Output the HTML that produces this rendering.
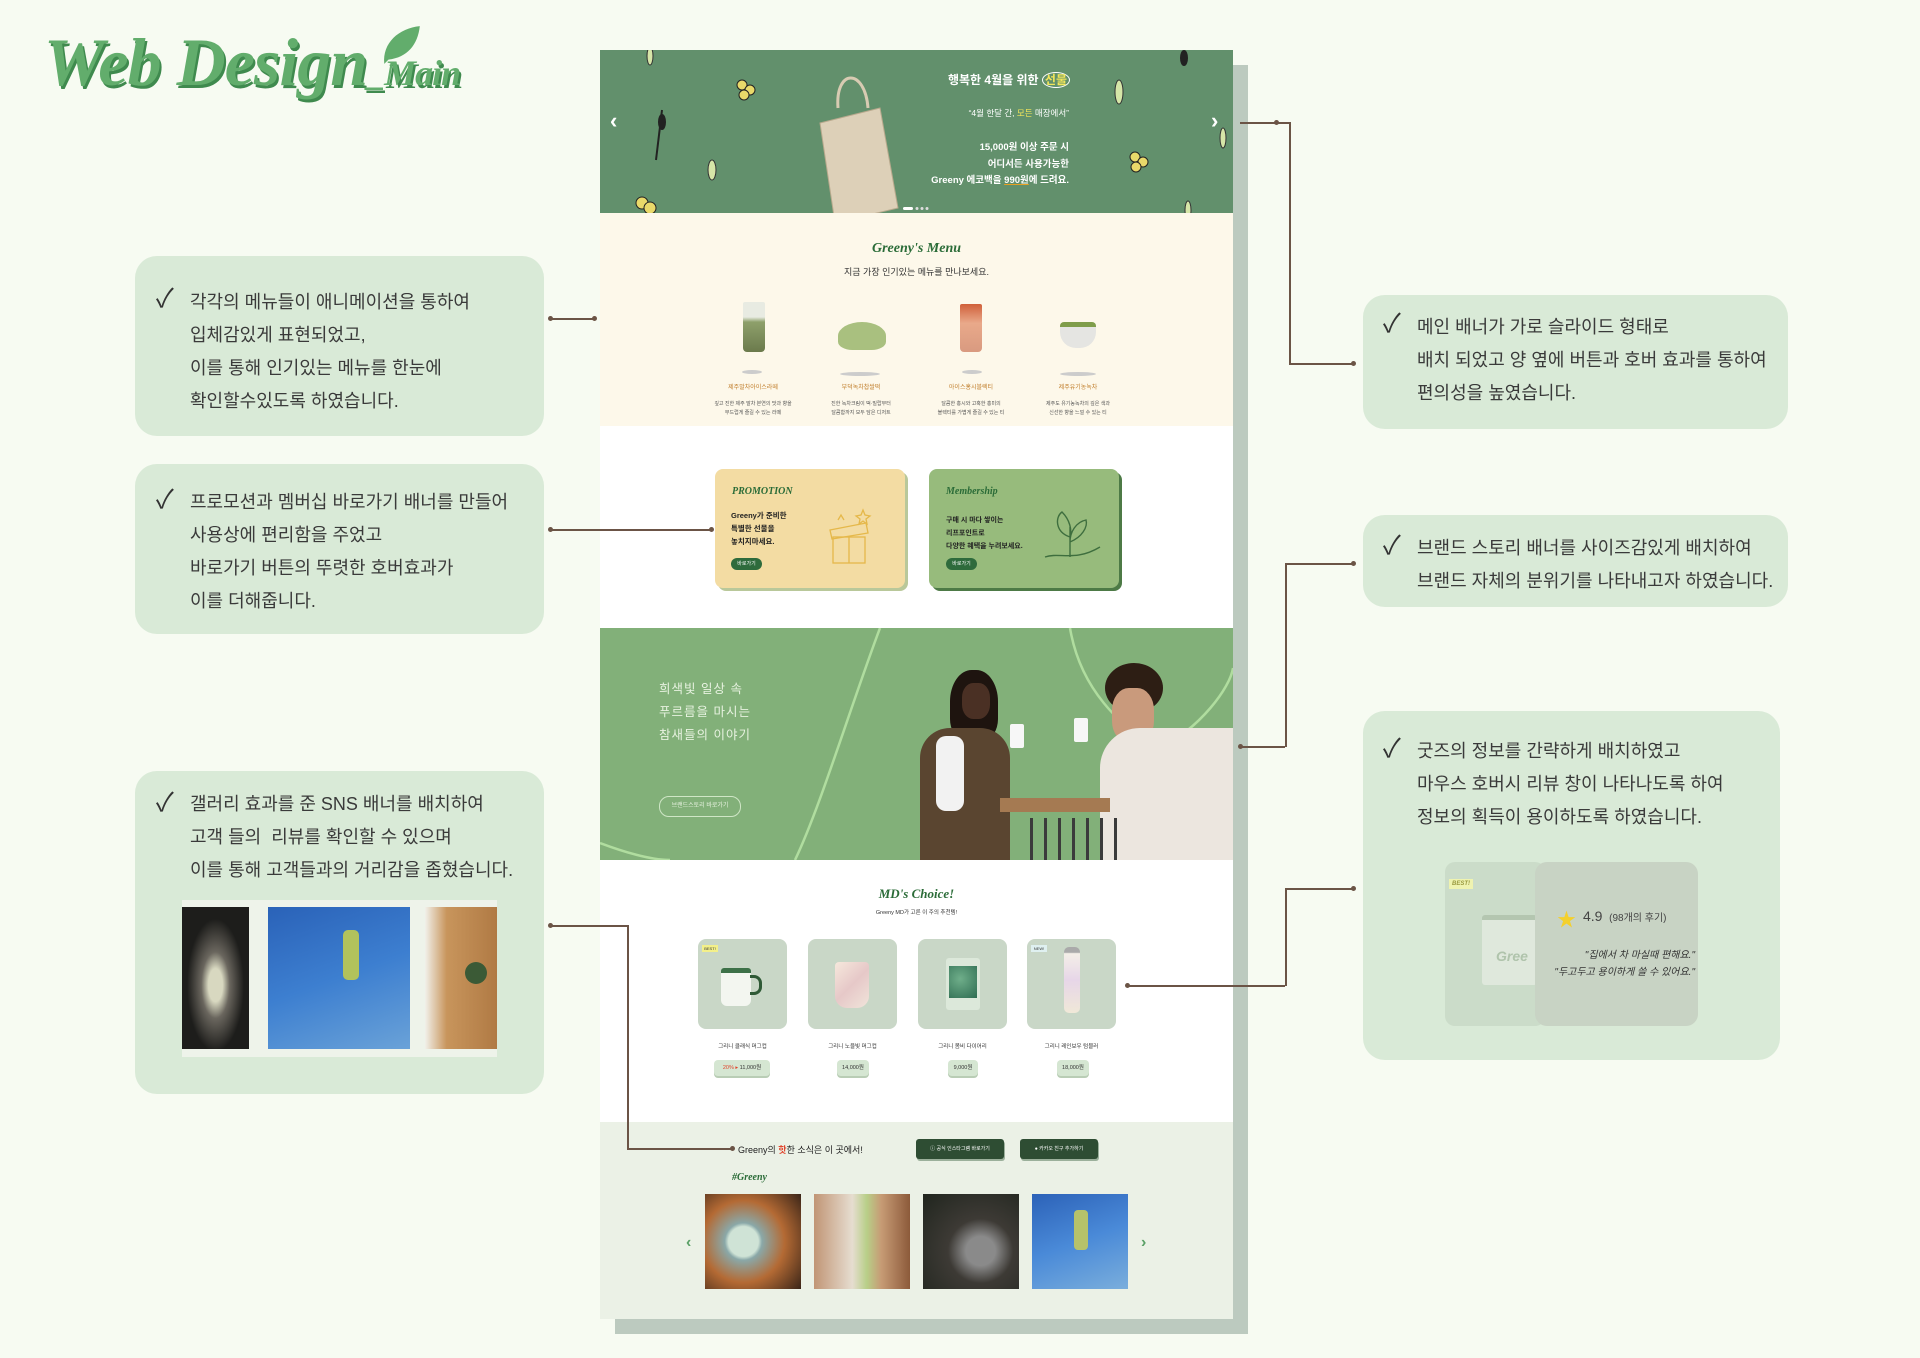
<!DOCTYPE html>
<html><head><meta charset="utf-8">
<style>
*{margin:0;padding:0;box-sizing:border-box}
body{width:1920px;height:1358px;background:#f7fbf2;position:relative;overflow:hidden;font-family:"Liberation Sans","Noto Sans CJK KR",sans-serif;color:#333}
.a{position:absolute}
.box{position:absolute;background:#d9ead7;border-radius:22px}
.tl{position:absolute;font-size:18px;line-height:24px;color:#3a3a3a;white-space:nowrap}
.ck{position:absolute;font-size:26px;line-height:24px;color:#333}
.ln{position:absolute;background:#6b5446}
.dot{position:absolute;width:5px;height:5px;border-radius:50%;background:#6b5446}
.c{text-align:center;white-space:nowrap}
.ser{font-family:"Liberation Serif","Noto Serif CJK SC",serif;font-style:italic;font-weight:bold}
</style></head><body>

<!-- title -->
<div class="a ser" style="left:44px;top:26px;font-size:68px;line-height:72px;color:#62ad6c;text-shadow:2px 3px 0 #3f8a4e;letter-spacing:-1px;font-weight:900">Web Design<span style="font-size:36px">_Main</span></div>
<svg class="a" style="left:378px;top:22px" width="46" height="46" viewBox="0 0 44 44"><path d="M6 40 C4 20 20 6 40 4 C38 22 28 34 10 36 Z" fill="#62ad6c"/></svg>

<!-- page shadow -->
<div class="a" style="left:615px;top:65px;width:633px;height:1269px;background:#bccabf"></div>
<!-- page -->
<div class="a" style="left:600px;top:50px;width:633px;height:1269px;background:#fff;overflow:hidden">
  <!-- banner -->
  <div class="a" style="left:0;top:0;width:633px;height:163px;background:#62906c"></div>
  <div class="a" style="left:10px;top:58px;color:#fff;font-size:22px;font-weight:bold">‹</div>
  <div class="a" style="left:611px;top:58px;color:#fff;font-size:22px;font-weight:bold">›</div>
  <svg class="a" style="left:0;top:0" width="633" height="163">
    <g fill="#e9d96a" stroke="#222" stroke-width="1"><circle cx="142" cy="35" r="5"/><circle cx="150" cy="40" r="5"/><circle cx="144" cy="45" r="5"/><circle cx="535" cy="107" r="5"/><circle cx="543" cy="112" r="5"/><circle cx="536" cy="117" r="5"/><circle cx="42" cy="153" r="6"/><circle cx="50" cy="158" r="6"/></g>
    <g stroke="#222" stroke-width="2" fill="#222"><path d="M56 110 L62 60"/><ellipse cx="62" cy="72" rx="3" ry="7"/><ellipse cx="584" cy="8" rx="3" ry="7"/></g>
    <g stroke="#333" fill="#d6e6a8"><ellipse cx="112" cy="120" rx="4" ry="10"/><ellipse cx="519" cy="42" rx="4" ry="12"/><ellipse cx="623" cy="88" rx="3" ry="10"/><ellipse cx="50" cy="6" rx="3" ry="9"/><ellipse cx="588" cy="160" rx="3" ry="9"/></g>
    <rect x="303" y="157" width="10" height="3" rx="1.5" fill="#fff"/><circle cx="317" cy="158.5" r="1.5" fill="#ddd"/><circle cx="322" cy="158.5" r="1.5" fill="#ddd"/><circle cx="327" cy="158.5" r="1.5" fill="#ddd"/>
  </svg>
  <svg class="a" style="left:210px;top:18px" width="100" height="160"><path d="M28 40 C25 0 55 0 58 40" stroke="#d8cbb2" stroke-width="3" fill="none"/><path d="M10 55 L70 40 L88 140 L25 155 Z" fill="#ddd0b8"/><path d="M10 55 L70 40 L88 140 L25 155 Z" fill="none" stroke="#b8a98d"/></svg>
  <div class="a c" style="right:163px;top:21px;font-size:12px;color:#fff;font-weight:bold;line-height:18px">행복한 4월을 위한 <span style="color:#f3e65a;border:1px solid #fff;border-radius:50%;padding:0 2px">선물</span></div>
  <div class="a c" style="right:164px;top:56px;font-size:8.5px;color:#fff;line-height:14px">“4월 한달 간, <span style="color:#f3e65a">모든</span> 매장에서”</div>
  <div class="a" style="right:164px;top:90px;font-size:9.5px;color:#fff;line-height:16.5px;text-align:right;font-weight:bold">15,000원 이상 주문 시<br>어디서든 사용가능한<br>Greeny 에코백을 <span style="text-decoration:underline;text-decoration-color:#e8a020">990원</span>에 드려요.</div>

  <!-- menu -->
  <div class="a" style="left:0;top:163px;width:633px;height:213px;background:#fdf8ea"></div>
  <div class="a c ser" style="left:0;width:633px;top:191px;font-size:14px;color:#2b6c38">Greeny's Menu</div>
  <div class="a c" style="left:0;width:633px;top:215px;font-size:9px;color:#333">지금 가장 인기있는 메뉴를 만나보세요.</div>
  <div class="a" style="left:143px;top:252px;width:22px;height:50px;background:linear-gradient(#e8ebe2 0 30%,#8ea06b 40%,#6b7a4c);border-radius:2px 2px 4px 4px"></div>
  <div class="a" style="left:238px;top:272px;width:48px;height:28px;background:#a9c07f;border-radius:50% 50% 30% 30%"></div>
  <div class="a" style="left:360px;top:254px;width:22px;height:48px;background:linear-gradient(#d0603a,#e9a98a 40%,#d99a80);border-radius:2px 2px 4px 4px"></div>
  <div class="a" style="left:460px;top:272px;width:36px;height:26px;background:#e5e5e2;border-radius:4px 4px 16px 16px;border-top:5px solid #7f9d4a"></div>
  <div class="a" style="left:142px;top:320px;width:20px;height:4px;background:#ccc;border-radius:50%"></div>
  <div class="a" style="left:240px;top:322px;width:40px;height:4px;background:#ccc;border-radius:50%"></div>
  <div class="a" style="left:362px;top:320px;width:20px;height:4px;background:#ccc;border-radius:50%"></div>
  <div class="a" style="left:460px;top:322px;width:36px;height:4px;background:#ccc;border-radius:50%"></div>
  <div class="a c" style="left:103px;width:100px;top:332px;font-size:6px;color:#c07d2a">제주말차아이스라떼</div>
  <div class="a c" style="left:211px;width:100px;top:332px;font-size:6px;color:#c07d2a">부덕녹차찹쌀떡</div>
  <div class="a c" style="left:321px;width:100px;top:332px;font-size:6px;color:#c07d2a">아이스홍시블렉티</div>
  <div class="a c" style="left:428px;width:100px;top:332px;font-size:6px;color:#c07d2a">제주유기농녹차</div>
  <div class="a c" style="left:103px;width:100px;top:350px;font-size:5px;line-height:9px;color:#555">깊고 진한 제주 말차 본연의 맛과 향을<br>부드럽게 즐길 수 있는 라떼</div>
  <div class="a c" style="left:211px;width:100px;top:350px;font-size:5px;line-height:9px;color:#555">진한 녹차크림이 떡·밀랍부터<br>달콤함까지 모두 담은 디저트</div>
  <div class="a c" style="left:321px;width:100px;top:350px;font-size:5px;line-height:9px;color:#555">달콤한 홍시와 고혹한 홍미의<br>블렉티를 가볍게 즐길 수 있는 티</div>
  <div class="a c" style="left:428px;width:100px;top:350px;font-size:5px;line-height:9px;color:#555">제주도 유기농녹차의 깊은 색과<br>신선한 향을 느낄 수 있는 티</div>

  <!-- promo -->
  <div class="a" style="left:115px;top:419px;width:190px;height:119px;background:#f3dca3;border-radius:8px;box-shadow:3px 3px 0 #b9c89a"></div>
  <div class="a ser" style="left:132px;top:436px;font-size:10px;color:#2b6c38">PROMOTION</div>
  <div class="a" style="left:131px;top:459px;font-size:7.5px;line-height:13px;color:#222;font-weight:bold">Greeny가 준비한<br>특별한 선물을<br>놓치지마세요.</div>
  <div class="a" style="left:131px;top:508px;width:31px;height:12px;border-radius:6px;background:#2e6b3c;color:#fff;font-size:5px;line-height:12px;text-align:center">바로가기</div>
  <svg class="a" style="left:218px;top:455px" width="70" height="70" fill="none" stroke="#e5b84a" stroke-width="1.3"><rect x="15" y="32" width="32" height="26"/><path d="M12 25 L48 18 L50 28 L14 34 Z M31 32 V58 M20 15 L23 10 L26 15 M45 5 L47 10 L52 11 L48 14 L49 19 L45 16 L41 19 L42 14 L38 11 L43 10 Z"/></svg>
  <div class="a" style="left:329px;top:419px;width:190px;height:119px;background:#97bb7c;border-radius:8px;box-shadow:3px 3px 0 #4d7a46"></div>
  <div class="a ser" style="left:346px;top:436px;font-size:10px;color:#2b6c38">Membership</div>
  <div class="a" style="left:346px;top:464px;font-size:7px;line-height:13px;color:#222;font-weight:bold">구매 시 마다 쌓이는<br>리프포인트로<br>다양한 혜택을 누려보세요.</div>
  <div class="a" style="left:346px;top:508px;width:31px;height:12px;border-radius:6px;background:#2e6b3c;color:#fff;font-size:5px;line-height:12px;text-align:center">바로가기</div>
  <svg class="a" style="left:440px;top:452px" width="70" height="70" fill="none" stroke="#3e6e3e" stroke-width="1.4"><path d="M30 55 V25 M30 35 C15 30 15 15 22 10 C30 18 32 28 30 35 M30 40 C42 35 48 25 46 18 C36 20 30 30 30 40 M5 55 C20 50 35 60 60 45"/></svg>

  <!-- brand -->
  <div class="a" style="left:0;top:578px;width:633px;height:232px;background:#82b079;overflow:hidden">
    <svg class="a" style="left:0;top:0" width="633" height="232" fill="none" stroke="#b0dd9f" stroke-width="2.5"><path d="M280 0 C250 80 220 180 195 232"/><path d="M470 0 C480 60 520 100 560 120 C600 100 630 60 633 40"/><path d="M0 215 C40 230 60 232 70 232"/></svg>
    <div class="a" style="left:59px;top:50px;font-size:12.5px;line-height:23px;color:#e7f2e0;letter-spacing:1px">희색빛 일상 속<br>푸르름을 마시는<br>참새들의 이야기</div>
    <div class="a" style="left:59px;top:168px;width:82px;height:21px;border:1.5px solid #cfe6c6;border-radius:10px;color:#e7f2e0;font-size:6px;line-height:18px;text-align:center">브랜드스토리 바로가기</div>
    <div class="a" style="left:350px;top:42px;width:48px;height:70px;background:#1e140f;border-radius:45% 45% 30% 30%"></div>
    <div class="a" style="left:362px;top:55px;width:28px;height:36px;background:#4a3024;border-radius:40%"></div>
    <div class="a" style="left:320px;top:100px;width:90px;height:140px;background:#5a4530;border-radius:30px 30px 0 0"></div>
    <div class="a" style="left:336px;top:108px;width:28px;height:75px;background:#f2f2f2;border-radius:10px"></div>
    <div class="a" style="left:505px;top:35px;width:58px;height:50px;background:#2d1e14;border-radius:50%"></div>
    <div class="a" style="left:512px;top:60px;width:42px;height:55px;background:#c99a7c;border-radius:40%"></div>
    <div class="a" style="left:500px;top:100px;width:133px;height:140px;background:#ece6df;border-radius:40px 0 0 0"></div>
    <div class="a" style="left:400px;top:170px;width:110px;height:14px;background:#a57a52"></div>
    <div class="a" style="left:430px;top:190px;width:90px;height:42px;background:repeating-linear-gradient(90deg,#3b3b3b 0 3px,transparent 3px 14px)"></div>
    <div class="a" style="left:410px;top:96px;width:14px;height:24px;background:#f7f7f7;border-radius:2px"></div>
    <div class="a" style="left:474px;top:90px;width:14px;height:24px;background:#f7f7f7;border-radius:2px"></div>
  </div>

  <!-- MD -->
  <div class="a c ser" style="left:0;width:633px;top:836px;font-size:13px;color:#2b6c38">MD's Choice!</div>
  <div class="a c" style="left:0;width:633px;top:858px;font-size:5.5px;color:#333">Greeny MD가 고른 이 주의 추천템!</div>
  <div class="a" style="left:98px;top:889px;width:89px;height:90px;background:#c9d7c7;border-radius:8px"></div>
  <div class="a" style="left:208px;top:889px;width:89px;height:90px;background:#c9d7c7;border-radius:8px"></div>
  <div class="a" style="left:318px;top:889px;width:89px;height:90px;background:#c9d7c7;border-radius:8px"></div>
  <div class="a" style="left:427px;top:889px;width:89px;height:90px;background:#c9d7c7;border-radius:8px"></div>
  <div class="a" style="left:102px;top:895px;width:16px;height:7px;background:#f3f08a;font-size:4px;line-height:7px;text-align:center">BEST!</div>
  <div class="a" style="left:431px;top:895px;width:16px;height:7px;background:#dff0f0;font-size:4px;line-height:7px;text-align:center">NEW!</div>
  <div class="a" style="left:121px;top:918px;width:30px;height:38px;background:#f3f6f0;border-radius:3px 3px 6px 6px;border-top:5px solid #3d7148"></div>
  <div class="a" style="left:150px;top:925px;width:12px;height:20px;border:3px solid #2f5a36;border-left:none;border-radius:0 8px 8px 0"></div>
  <div class="a" style="left:235px;top:912px;width:34px;height:46px;background:linear-gradient(135deg,#f6e8dc,#e6c8c8,#f0e4da);border-radius:4px 4px 12px 12px"></div>
  <div class="a" style="left:346px;top:908px;width:34px;height:52px;background:#dce8da;border-radius:3px"></div>
  <div class="a" style="left:349px;top:916px;width:28px;height:32px;background:radial-gradient(circle at 40% 40%,#6fae8a,#2f6d52)"></div>
  <div class="a" style="left:464px;top:897px;width:16px;height:66px;background:linear-gradient(#aaa 0 8%,#f4efe8 10%,#e7d6e8 50%,#f0e8d8);border-radius:5px"></div>
  <div class="a c" style="left:98px;width:89px;top:992px;font-size:5.5px;color:#333">그리니 클래식 머그컵</div>
  <div class="a c" style="left:208px;width:89px;top:992px;font-size:5.5px;color:#333">그리니 노을빛 머그컵</div>
  <div class="a c" style="left:318px;width:89px;top:992px;font-size:5.5px;color:#333">그리니 봄비 다이어리</div>
  <div class="a c" style="left:427px;width:89px;top:992px;font-size:5.5px;color:#333">그리니 레인보우 텀블러</div>
  <div class="a c" style="left:114px;width:56px;top:1010px;height:16px;line-height:16px;background:#d5e6d2;border-radius:4px;font-size:5.5px;box-shadow:0 2px 0 #b9cdb5"><span style="color:#e0442b">20% ▸</span> 11,000원</div>
  <div class="a c" style="left:237px;width:32px;top:1010px;height:16px;line-height:16px;background:#d5e6d2;border-radius:4px;font-size:5.5px;box-shadow:0 2px 0 #b9cdb5">14,000원</div>
  <div class="a c" style="left:348px;width:30px;top:1010px;height:16px;line-height:16px;background:#d5e6d2;border-radius:4px;font-size:5.5px;box-shadow:0 2px 0 #b9cdb5">9,000원</div>
  <div class="a c" style="left:457px;width:32px;top:1010px;height:16px;line-height:16px;background:#d5e6d2;border-radius:4px;font-size:5.5px;box-shadow:0 2px 0 #b9cdb5">18,000원</div>

  <!-- SNS -->
  <div class="a" style="left:0;top:1072px;width:633px;height:197px;background:#ebf1e6"></div>
  <div class="a" style="left:138px;top:1093px;font-size:9px;color:#222">Greeny의 <span style="color:#e0442b;font-weight:bold">핫</span>한 소식은 이 곳에서!</div>
  <div class="a c" style="left:316px;top:1089px;width:88px;height:20px;background:#2e4d33;border-radius:3px;color:#fff;font-size:5px;line-height:20px;box-shadow:1px 2px 0 #9bb09b">ⓘ 공식 인스타그램 바로가기</div>
  <div class="a c" style="left:420px;top:1089px;width:78px;height:20px;background:#2e4d33;border-radius:3px;color:#fff;font-size:5px;line-height:20px;box-shadow:1px 2px 0 #9bb09b">● 카카오 친구 추가하기</div>
  <div class="a ser" style="left:132px;top:1122px;font-size:10px;color:#2b6c38">#Greeny</div>
  <div class="a" style="left:86px;top:1184px;color:#5aa066;font-size:16px;font-weight:bold">‹</div>
  <div class="a" style="left:541px;top:1184px;color:#5aa066;font-size:16px;font-weight:bold">›</div>
  <div class="a" style="left:105px;top:1144px;width:96px;height:95px;background:radial-gradient(circle at 40% 50%,#cfe3d6 0 20%,#8aa8a8 25%,#b46a34 55%,#3a2518)"></div>
  <div class="a" style="left:214px;top:1144px;width:96px;height:95px;background:linear-gradient(90deg,#c19575,#e6ddd0 40%,#b8cf88 55%,#c79b75 70%,#8c5a3a)"></div>
  <div class="a" style="left:323px;top:1144px;width:96px;height:95px;background:radial-gradient(ellipse at 60% 60%,#8a8a8a 0 18%,#3d3a35 40%,#20251e)"></div>
  <div class="a" style="left:432px;top:1144px;width:96px;height:95px;background:linear-gradient(160deg,#2c62b8,#4a8ad8 50%,#7aaedc)"></div>
  <div class="a" style="left:474px;top:1160px;width:14px;height:40px;background:#b6c26a;border-radius:4px"></div>
</div>

<!-- left boxes -->
<div class="box" style="left:135px;top:256px;width:409px;height:180px"></div>
<div class="ck" style="left:156px;top:286px">✓</div>
<div class="tl" style="left:190px;top:286px;line-height:33px">각각의 메뉴들이 애니메이션을 통하여<br>입체감있게 표현되었고,<br>이를 통해 인기있는 메뉴를 한눈에<br>확인할수있도록 하였습니다.</div>

<div class="box" style="left:135px;top:464px;width:409px;height:170px"></div>
<div class="ck" style="left:156px;top:487px">✓</div>
<div class="tl" style="left:190px;top:486px;line-height:33px">프로모션과 멤버십 바로가기 배너를 만들어<br>사용상에 편리함을 주었고<br>바로가기 버튼의 뚜렷한 호버효과가<br>이를 더해줍니다.</div>

<div class="box" style="left:135px;top:771px;width:409px;height:323px"></div>
<div class="ck" style="left:156px;top:790px">✓</div>
<div class="tl" style="left:190px;top:788px;line-height:33px">갤러리 효과를 준 SNS 배너를 배치하여<br>고객 들의&nbsp; 리뷰를 확인할 수 있으며<br>이를 통해 고객들과의 거리감을 좁혔습니다.</div>
<div class="a" style="left:182px;top:900px;width:315px;height:157px;background:#eef3ea"></div>
<div class="a" style="left:182px;top:907px;width:67px;height:142px;background:radial-gradient(ellipse at 50% 55%,#d8d8c0 0 15%,#6a665e 30%,#1d1d1b 60%)"></div>
<div class="a" style="left:268px;top:907px;width:142px;height:142px;background:linear-gradient(160deg,#2a62b8,#3d7fd0 50%,#6aa2d8)"></div>
<div class="a" style="left:343px;top:930px;width:16px;height:50px;background:#b2c25c;border-radius:5px"></div>
<div class="a" style="left:425px;top:907px;width:72px;height:142px;background:linear-gradient(90deg,#f1f0ea,#c8955c 30%,#b07a44)"></div>
<div class="a" style="left:465px;top:962px;width:22px;height:22px;border-radius:50%;background:#3b5a36"></div>

<!-- right boxes -->
<div class="box" style="left:1363px;top:295px;width:425px;height:134px"></div>
<div class="ck" style="left:1383px;top:311px">✓</div>
<div class="tl" style="left:1417px;top:311px;line-height:33px">메인 배너가 가로 슬라이드 형태로<br>배치 되었고 양 옆에 버튼과 호버 효과를 통하여<br>편의성을 높였습니다.</div>

<div class="box" style="left:1363px;top:515px;width:425px;height:92px"></div>
<div class="ck" style="left:1383px;top:533px">✓</div>
<div class="tl" style="left:1417px;top:532px;line-height:33px">브랜드 스토리 배너를 사이즈감있게 배치하여<br>브랜드 자체의 분위기를 나타내고자 하였습니다.</div>

<div class="box" style="left:1363px;top:711px;width:417px;height:349px"></div>
<div class="ck" style="left:1383px;top:736px">✓</div>
<div class="tl" style="left:1417px;top:735px;line-height:33px">굿즈의 정보를 간략하게 배치하였고<br>마우스 호버시 리뷰 창이 나타나도록 하여<br>정보의 획득이 용이하도록 하였습니다.</div>
<div class="a" style="left:1445px;top:862px;width:100px;height:164px;background:#cbdcc9;border-radius:10px"></div>
<div class="a" style="left:1449px;top:879px;width:24px;height:10px;background:#eff3b0;font-size:6px;line-height:10px;text-align:center;color:#9a9a40;font-style:italic;font-weight:bold">BEST!</div>
<div class="a" style="left:1482px;top:915px;width:55px;height:70px;background:#dfe8dc;border-top:5px solid #b4c6b0;border-radius:3px"></div>
<div class="a" style="left:1535px;top:862px;width:163px;height:164px;background:#c8d3c4;border-radius:12px"></div>
<div class="a" style="left:1557px;top:905px;font-size:19px;color:#f4d02c">★</div>
<div class="a" style="left:1583px;top:908px;font-size:14px;color:#444">4.9 <span style="font-size:10px">&nbsp;(98개의 후기)</span></div>
<div class="a" style="left:1545px;top:947px;width:150px;font-size:10px;line-height:17px;color:#333;font-style:italic;text-align:right">"집에서 차 마실때 편해요."<br>"두고두고 용이하게 쓸 수 있어요."</div>
<div class="a" style="left:1496px;top:948px;font-size:14px;color:#b0c4ac;font-weight:bold;font-style:italic">Gree</div>

<!-- connector lines -->
<div class="ln" style="left:550px;top:318px;width:45px;height:1.5px"></div><div class="dot" style="left:548px;top:316px"></div><div class="dot" style="left:592px;top:316px"></div>
<div class="ln" style="left:550px;top:529px;width:161px;height:1.5px"></div><div class="dot" style="left:548px;top:527px"></div><div class="dot" style="left:709px;top:527px"></div>
<div class="ln" style="left:550px;top:925px;width:78px;height:1.5px"></div><div class="ln" style="left:627px;top:925px;width:1.5px;height:224px"></div><div class="ln" style="left:627px;top:1148px;width:105px;height:1.5px"></div><div class="dot" style="left:548px;top:923px"></div><div class="dot" style="left:730px;top:1146px"></div>
<div class="ln" style="left:1240px;top:122px;width:49px;height:1.5px"></div><div class="ln" style="left:1289px;top:122px;width:1.5px;height:242px"></div><div class="ln" style="left:1289px;top:363px;width:64px;height:1.5px"></div><div class="dot" style="left:1274px;top:120px"></div><div class="dot" style="left:1351px;top:361px"></div>
<div class="ln" style="left:1240px;top:746px;width:45px;height:1.5px"></div><div class="ln" style="left:1285px;top:563px;width:1.5px;height:184px"></div><div class="ln" style="left:1285px;top:563px;width:68px;height:1.5px"></div><div class="dot" style="left:1238px;top:744px"></div><div class="dot" style="left:1351px;top:561px"></div>
<div class="ln" style="left:1127px;top:985px;width:158px;height:1.5px"></div><div class="ln" style="left:1285px;top:888px;width:1.5px;height:98px"></div><div class="ln" style="left:1285px;top:888px;width:68px;height:1.5px"></div><div class="dot" style="left:1125px;top:983px"></div><div class="dot" style="left:1351px;top:886px"></div>
</body></html>
